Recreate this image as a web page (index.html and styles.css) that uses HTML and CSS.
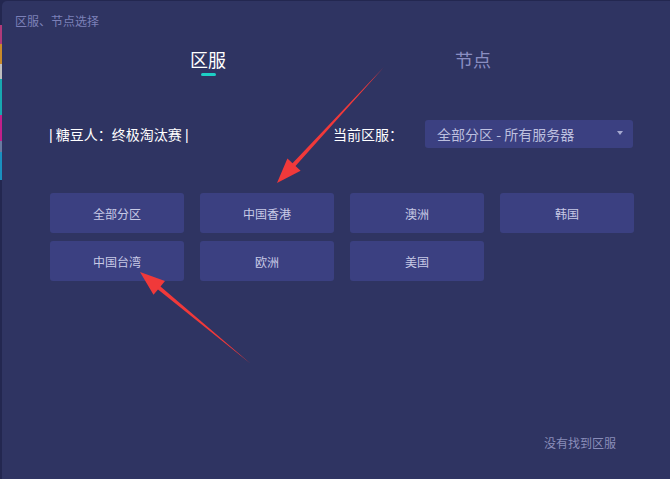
FILE: index.html
```html
<!DOCTYPE html>
<html lang="zh-CN">
<head>
    <meta charset="UTF-8">
    <title>区服、节点选择</title>
    <link rel="stylesheet" href="styles.css">
</head>
<body>
    <div class="desk-strip"></div>
    <div class="window">
        <div class="title">区服、节点选择</div>

        <div class="tabs">
            <div class="tab active">区服<span class="bar"></span></div>
            <div class="tab">节点</div>
        </div>

        <div class="info-row">
            <div class="game"><span class="pipe">|</span> 糖豆人：终极淘汰赛 <span class="pipe">|</span></div>
            <div class="current">
                <span class="label">当前区服：</span>
                <div class="select">
                    <span>全部分区 - 所有服务器</span>
                    <span class="caret"></span>
                </div>
            </div>
        </div>

        <div class="regions">
            <div class="region">全部分区</div>
            <div class="region">中国香港</div>
            <div class="region">澳洲</div>
            <div class="region">韩国</div>
            <div class="region">中国台湾</div>
            <div class="region">欧洲</div>
            <div class="region">美国</div>
        </div>

        <div class="not-found">没有找到区服</div>

        <!-- annotation arrows -->
        <svg class="arrows" width="670" height="479" viewBox="0 0 670 479">
            <polygon fill="#f0393a" points="384,67 295.5,166 300.6,170.7 277,183 287.4,158.5 292.5,163.2"/>
            <polygon fill="#f0393a" points="251,364 160.5,286.4 165,281 140,272 153.5,294.8 158,289.4"/>
        </svg>
    </div>
</body>
</html>
```

FILE: styles.css
```css
html, body {
    margin: 0;
    height: 100%;
}
body {
    background-color: #232750;
    font-family: "Noto Sans CJK SC", "Noto Sans", sans-serif;
    padding: 1px 0 0 2px;
    box-sizing: border-box;
    overflow: hidden;
}
.desk-strip {
    position: absolute;
    left: 0;
    top: 25px;
    width: 2px;
    height: 155px;
    background: linear-gradient(#b03a7a 0 12%, #c98a2a 12% 25%, #bfbfbf 25% 35%, #17a8b0 35% 58%, #c0208a 58% 75%, #6a7aa0 75% 82%, #1a90c0 82% 100%);
}
.window {
    position: relative;
    height: 100%;
    background-color: #2f3462;
    border-radius: 5px 0 0 0;
}
.title {
    font-size: 12px;
    line-height: 16px;
    color: #7c80b8;
    padding: 12px 0 0 13px;
}
.tabs {
    display: flex;
    gap: 165px;
    padding-left: 156px;
    margin-top: 17px;
}
.tab {
    width: 100px;
    text-align: center;
    font-size: 18px;
    line-height: 26px;
    color: #8a8ec2;
    position: relative;
}
.tab.active {
    color: #ffffff;
}
.tab .bar {
    display: block;
    width: 15px;
    height: 3px;
    margin: 1px auto 0;
    border-radius: 2px;
    background-color: #1dcfc6;
}
.info-row {
    display: flex;
    align-items: center;
    justify-content: space-between;
    padding: 0 37px 0 47px;
    margin-top: 44px;
}
.game {
    font-size: 14px;
    color: #ffffff;
}
.pipe {
    font-family: "Liberation Sans", sans-serif;
    color: #ffffff;
}
.current {
    display: flex;
    align-items: center;
}
.label {
    font-size: 14px;
    color: #ffffff;
    margin-right: 22px;
}
.select {
    width: 208px;
    height: 28px;
    box-sizing: border-box;
    display: flex;
    align-items: center;
    justify-content: space-between;
    padding: 0 10px 0 12px;
    background-color: #3b4081;
    border-radius: 3px;
    font-size: 14px;
    color: #bcbfdf;
    white-space: pre;
}
.caret {
    width: 0;
    height: 0;
    border-left: 3px solid transparent;
    border-right: 3px solid transparent;
    border-top: 4px solid #a6a9d0;
    margin-top: -2px;
}
.regions {
    display: grid;
    grid-template-columns: repeat(4, 134px);
    grid-auto-rows: 40px;
    column-gap: 16px;
    row-gap: 8px;
    padding-left: 48px;
    margin-top: 45px;
}
.region {
    display: flex;
    align-items: center;
    justify-content: center;
    background-color: #3b4081;
    border-radius: 3px;
    font-size: 12px;
    color: #c8cae6;
}
.not-found {
    position: absolute;
    right: 54px;
    bottom: 28px;
    font-size: 12px;
    color: #8a8db9;
}
.arrows {
    position: absolute;
    left: -2px;
    top: -1px;
    pointer-events: none;
}
```
